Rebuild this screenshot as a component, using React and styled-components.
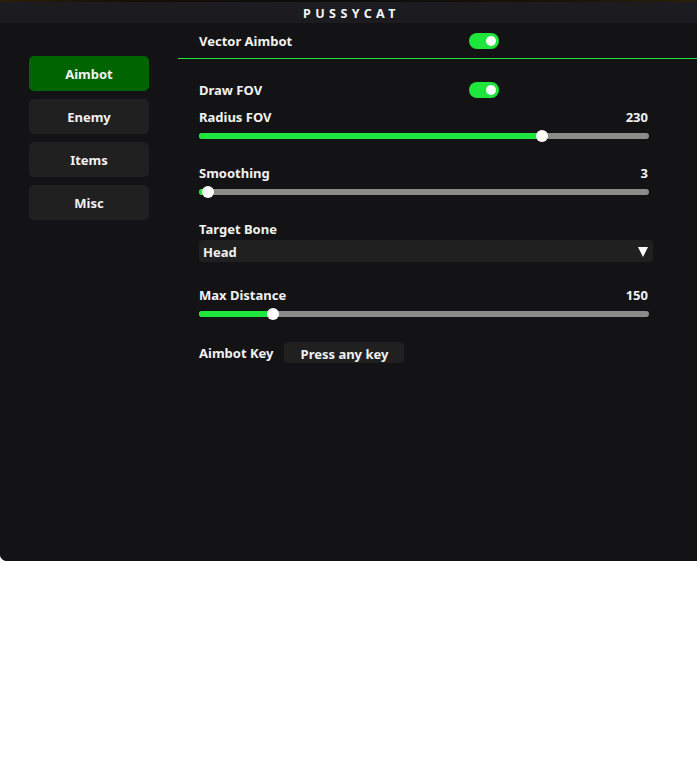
import React from "react";
import styled, { createGlobalStyle } from "styled-components";

const GlobalStyle = createGlobalStyle`
  html, body {
    margin: 0;
    padding: 0;
    background: #ffffff;
  }
  body {
    font-family: "Noto Sans", "DejaVu Sans", sans-serif;
  }
`;

const StyleBackdrop = styled.div`
  width: 697px;
  background: linear-gradient(90deg, #2a1e0e 0%, #120e08 20%, #0c0c0c 50%, #1b150a 85%, #2a200f 100%);
  padding-top: 2px;
  border-radius: 0 0 0 7px;
`;

const StyleWindow = styled.div`
  width: 697px;
  height: 559px;
  display: flex;
  flex-direction: column;
  background-color: #131315;
  border-radius: 0 0 0 7px;
  overflow: hidden;
`;

const StyleTitleBar = styled.div`
  height: 21px;
  flex-shrink: 0;
  background-color: #1c1c20;
  display: flex;
  align-items: center;
  justify-content: center;
  color: #f4f4f4;
  font-size: 12.5px;
  font-weight: 700;
  letter-spacing: 4.4px;
  padding: 1px 0 0 6px;
  box-sizing: border-box;
`;

const StyleBody = styled.div`
  flex: 1;
  display: flex;
`;

const StyleSidebar = styled.div`
  width: 120px;
  padding: 33px 29px 0 29px;
  display: flex;
  flex-direction: column;
  gap: 8px;
`;

const StyleTab = styled.div`
  height: 35px;
  border-radius: 5px;
  background-color: ${(props) => (props.active ? "#006400" : "#202021")};
  color: #f2f2f2;
  font-size: 13px;
  font-weight: 700;
  display: flex;
  align-items: center;
  justify-content: center;
`;

const StyleContent = styled.div`
  flex: 1;
  display: flex;
  flex-direction: column;
`;

const StyleHeader = styled.div`
  height: 35px;
  border-bottom: 1px solid #1ee63c;
  padding-left: 21px;
  display: flex;
  align-items: center;
`;

const StyleSettings = styled.div`
  width: 450px;
  padding: 23px 0 0 21px;
  display: flex;
  flex-direction: column;
`;

const StyleLabel = styled.span`
  color: #f2f2f2;
  font-size: 13px;
  font-weight: 700;
  width: ${(props) => props.width || "auto"};
  flex-shrink: 0;
`;

const StyleToggleRow = styled.div`
  height: 16px;
  display: flex;
  align-items: center;
`;

const StyleToggle = styled.div`
  width: 30px;
  height: 16px;
  border-radius: 8px;
  background-color: ${(props) => (props.on ? "#1ee63c" : "#555")};
  position: relative;

  &::after {
    content: "";
    position: absolute;
    top: 3px;
    right: ${(props) => (props.on ? "3px" : "17px")};
    width: 10px;
    height: 10px;
    border-radius: 50%;
    background: #ffffff;
  }
`;

const StyleLabelRow = styled.div`
  height: 18px;
  margin-top: ${(props) => props.mt || "0px"};
  display: flex;
  align-items: center;
  justify-content: space-between;
`;

const StyleTrackArea = styled.div`
  height: 14px;
  margin-top: 3px;
  display: flex;
  align-items: center;
`;

const StyleTrack = styled.div`
  position: relative;
  width: 100%;
  height: 6px;
  border-radius: 3px;
  background-color: #8b8b89;
`;

const StyleFill = styled.div`
  height: 100%;
  border-radius: 3px 0 0 3px;
  background-color: #1ee63c;
`;

const StyleKnob = styled.div`
  position: absolute;
  top: -3px;
  width: 12px;
  height: 12px;
  margin-left: -6px;
  border-radius: 50%;
  background: #ffffff;
`;

const StyleSelect = styled.div`
  height: 22px;
  margin-top: 2px;
  width: 454px;
  border-radius: 4px;
  background-color: #202021;
  display: flex;
  align-items: center;
  justify-content: space-between;
  padding: 1px 4px 0 4px;
  box-sizing: border-box;
  color: #f2f2f2;
  font-size: 13px;
  font-weight: 700;
`;

const StyleArrow = styled.div`
  width: 0;
  height: 0;
  border-left: 5px solid transparent;
  border-right: 5px solid transparent;
  border-top: 10px solid #ffffff;
  margin-right: 1px;
`;

const StyleKeyRow = styled.div`
  margin-top: 21px;
  height: 21px;
  display: flex;
  align-items: center;
  gap: 11px;
`;

const StyleKeyButton = styled.div`
  width: 120px;
  height: 21px;
  border-radius: 4px;
  background-color: #202021;
  color: #f2f2f2;
  font-size: 13px;
  font-weight: 700;
  display: flex;
  align-items: center;
  justify-content: center;
  padding-top: 3px;
  box-sizing: border-box;
`;

function Slider({ label, value, pct, mt }) {
  return (
    <>
      <StyleLabelRow mt={mt}>
        <StyleLabel>{label}</StyleLabel>
        <StyleLabel style={{ marginRight: 1 }}>{value}</StyleLabel>
      </StyleLabelRow>
      <StyleTrackArea>
        <StyleTrack>
          <StyleFill style={{ width: `${pct}%` }} />
          <StyleKnob style={{ left: `${pct}%` }} />
        </StyleTrack>
      </StyleTrackArea>
    </>
  );
}

const tabs = ["Aimbot", "Enemy", "Items", "Misc"];

export default function App() {
  return (
    <StyleBackdrop>
      <GlobalStyle />
      <StyleWindow>
        <StyleTitleBar>PUSSYCAT</StyleTitleBar>
        <StyleBody>
          <StyleSidebar>
            {tabs.map((t, i) => (
              <StyleTab key={t} active={i === 0}>
                {t}
              </StyleTab>
            ))}
          </StyleSidebar>
          <StyleContent>
            <StyleHeader>
              <StyleLabel width="270px">Vector Aimbot</StyleLabel>
              <StyleToggle on />
            </StyleHeader>
            <StyleSettings>
              <StyleToggleRow>
                <StyleLabel width="270px">Draw FOV</StyleLabel>
                <StyleToggle on />
              </StyleToggleRow>
              <Slider label="Radius FOV" value="230" pct={76.2} mt="10px" />
              <Slider label="Smoothing" value="3" pct={2} mt="21px" />
              <StyleLabelRow mt="21px">
                <StyleLabel>Target Bone</StyleLabel>
              </StyleLabelRow>
              <StyleSelect>
                <span>Head</span>
                <StyleArrow />
              </StyleSelect>
              <Slider label="Max Distance" value="150" pct={16.4} mt="24px" />
              <StyleKeyRow>
                <StyleLabel>Aimbot Key</StyleLabel>
                <StyleKeyButton>Press any key</StyleKeyButton>
              </StyleKeyRow>
            </StyleSettings>
          </StyleContent>
        </StyleBody>
      </StyleWindow>
    </StyleBackdrop>
  );
}
